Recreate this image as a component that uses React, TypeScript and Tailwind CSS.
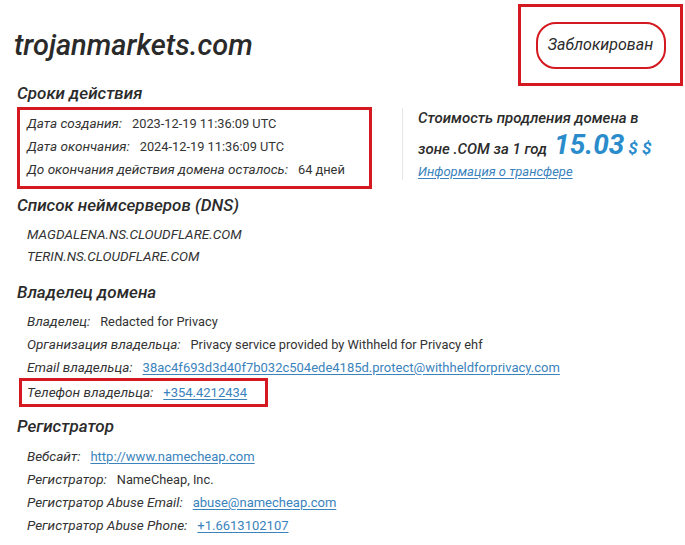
import React from 'react';

const FONT = { fontFamily: 'Roboto, "Noto Sans", sans-serif' };

function Row({ label, children }: { label: string; children: React.ReactNode }) {
  return (
    <div className="flex h-[23px] items-center whitespace-nowrap text-[#333]">
      <span className="text-[13.5px] italic">{label}</span>
      <span className="ml-[10px] text-[12.8px]">{children}</span>
    </div>
  );
}

function Link({ children }: { children: React.ReactNode }) {
  return <a className="text-[13px] text-[#3a83bd] underline underline-offset-2">{children}</a>;
}

function Heading({ children }: { children: React.ReactNode }) {
  return <div className="ml-[17px] text-[17px] italic font-medium leading-[22px] text-[#2b2b2b]">{children}</div>;
}

export default function App() {
  return (
    <div className="h-[545px] w-[685px] overflow-hidden bg-white" style={FONT}>
      <div className="flex items-start justify-between pr-[2px] pt-[4px]">
        <h1 className="ml-[14px] mt-[25px] text-[29px] italic font-medium leading-[32px] text-[#2a2a2a]">trojanmarkets.com</h1>
        <div className="flex h-[82px] w-[165px] items-center justify-center border-[3px] border-[#d41920]">
          <div className="flex h-[47px] w-[130px] items-center justify-center rounded-[20px] border-2 border-[#d41920] text-[16px] italic text-[#2a2a2a]">
            Заблокирован
          </div>
        </div>
      </div>

      <div className="mt-[-4px]">
        <Heading>Сроки действия</Heading>
      </div>

      <div className="mt-[3px] flex items-start">
        <div className="ml-[17px] h-[82px] w-[355px] border-[3px] border-[#d41920] pl-[7px] pt-[2px]">
          <Row label="Дата создания:">2023-12-19 11:36:09 UTC</Row>
          <Row label="Дата окончания:">2024-12-19 11:36:09 UTC</Row>
          <Row label="До окончания действия домена осталось:">64 дней</Row>
        </div>
        <div className="ml-[30px] mt-[1px] h-[72px] border-l border-[#e6e6e6] pl-[15px]">
          <div className="whitespace-nowrap text-[15px] italic font-medium leading-[20px] text-[#2b2b2b]">Стоимость продления домена в</div>
          <div className="mt-[2px] flex items-baseline whitespace-nowrap text-[15px] italic font-medium text-[#2b2b2b]">
            <span>зоне .COM за 1 год</span>
            <span className="ml-[7px] text-[28px] font-bold leading-[30px] text-[#2b8ccc]">15.03</span>
            <span className="ml-[4px] text-[17px] font-bold text-[#2b8ccc]">$ $</span>
          </div>
          <div className="text-[13px] italic text-[#3a83bd] underline underline-offset-2">Информация о трансфере</div>
        </div>
      </div>

      <div className="mt-[5px]">
        <Heading>Список неймсерверов (DNS)</Heading>
      </div>
      <div className="ml-[27px] mt-[7px] text-[13.5px] italic text-[#333]">
        <div className="flex h-[22px] items-center">MAGDALENA.NS.CLOUDFLARE.COM</div>
        <div className="flex h-[22px] items-center">TERIN.NS.CLOUDFLARE.COM</div>
      </div>

      <div className="mt-[14px]">
        <Heading>Владелец домена</Heading>
      </div>
      <div className="ml-[27px] mt-[7px]">
        <Row label="Владелец:">Redacted for Privacy</Row>
        <Row label="Организация владельца:">Privacy service provided by Withheld for Privacy ehf</Row>
        <Row label="Email владельца:">
          <Link>38ac4f693d3d40f7b032c504ede4185d.protect@withheldforprivacy.com</Link>
        </Row>
      </div>
      <div className="ml-[19px] mt-[-1px] w-[249px] border-[3px] border-[#d41920] pl-[5px]">
        <Row label="Телефон владельца:">
          <Link>+354.4212434</Link>
        </Row>
      </div>

      <div className="mt-[8px]">
        <Heading>Регистратор</Heading>
      </div>
      <div className="ml-[27px] mt-[8px]">
        <Row label="Вебсайт:">
          <Link>http://www.namecheap.com</Link>
        </Row>
        <Row label="Регистратор:">NameCheap, Inc.</Row>
        <Row label="Регистратор Abuse Email:">
          <Link>abuse@namecheap.com</Link>
        </Row>
        <Row label="Регистратор Abuse Phone:">
          <Link>+1.6613102107</Link>
        </Row>
      </div>
    </div>
  );
}
